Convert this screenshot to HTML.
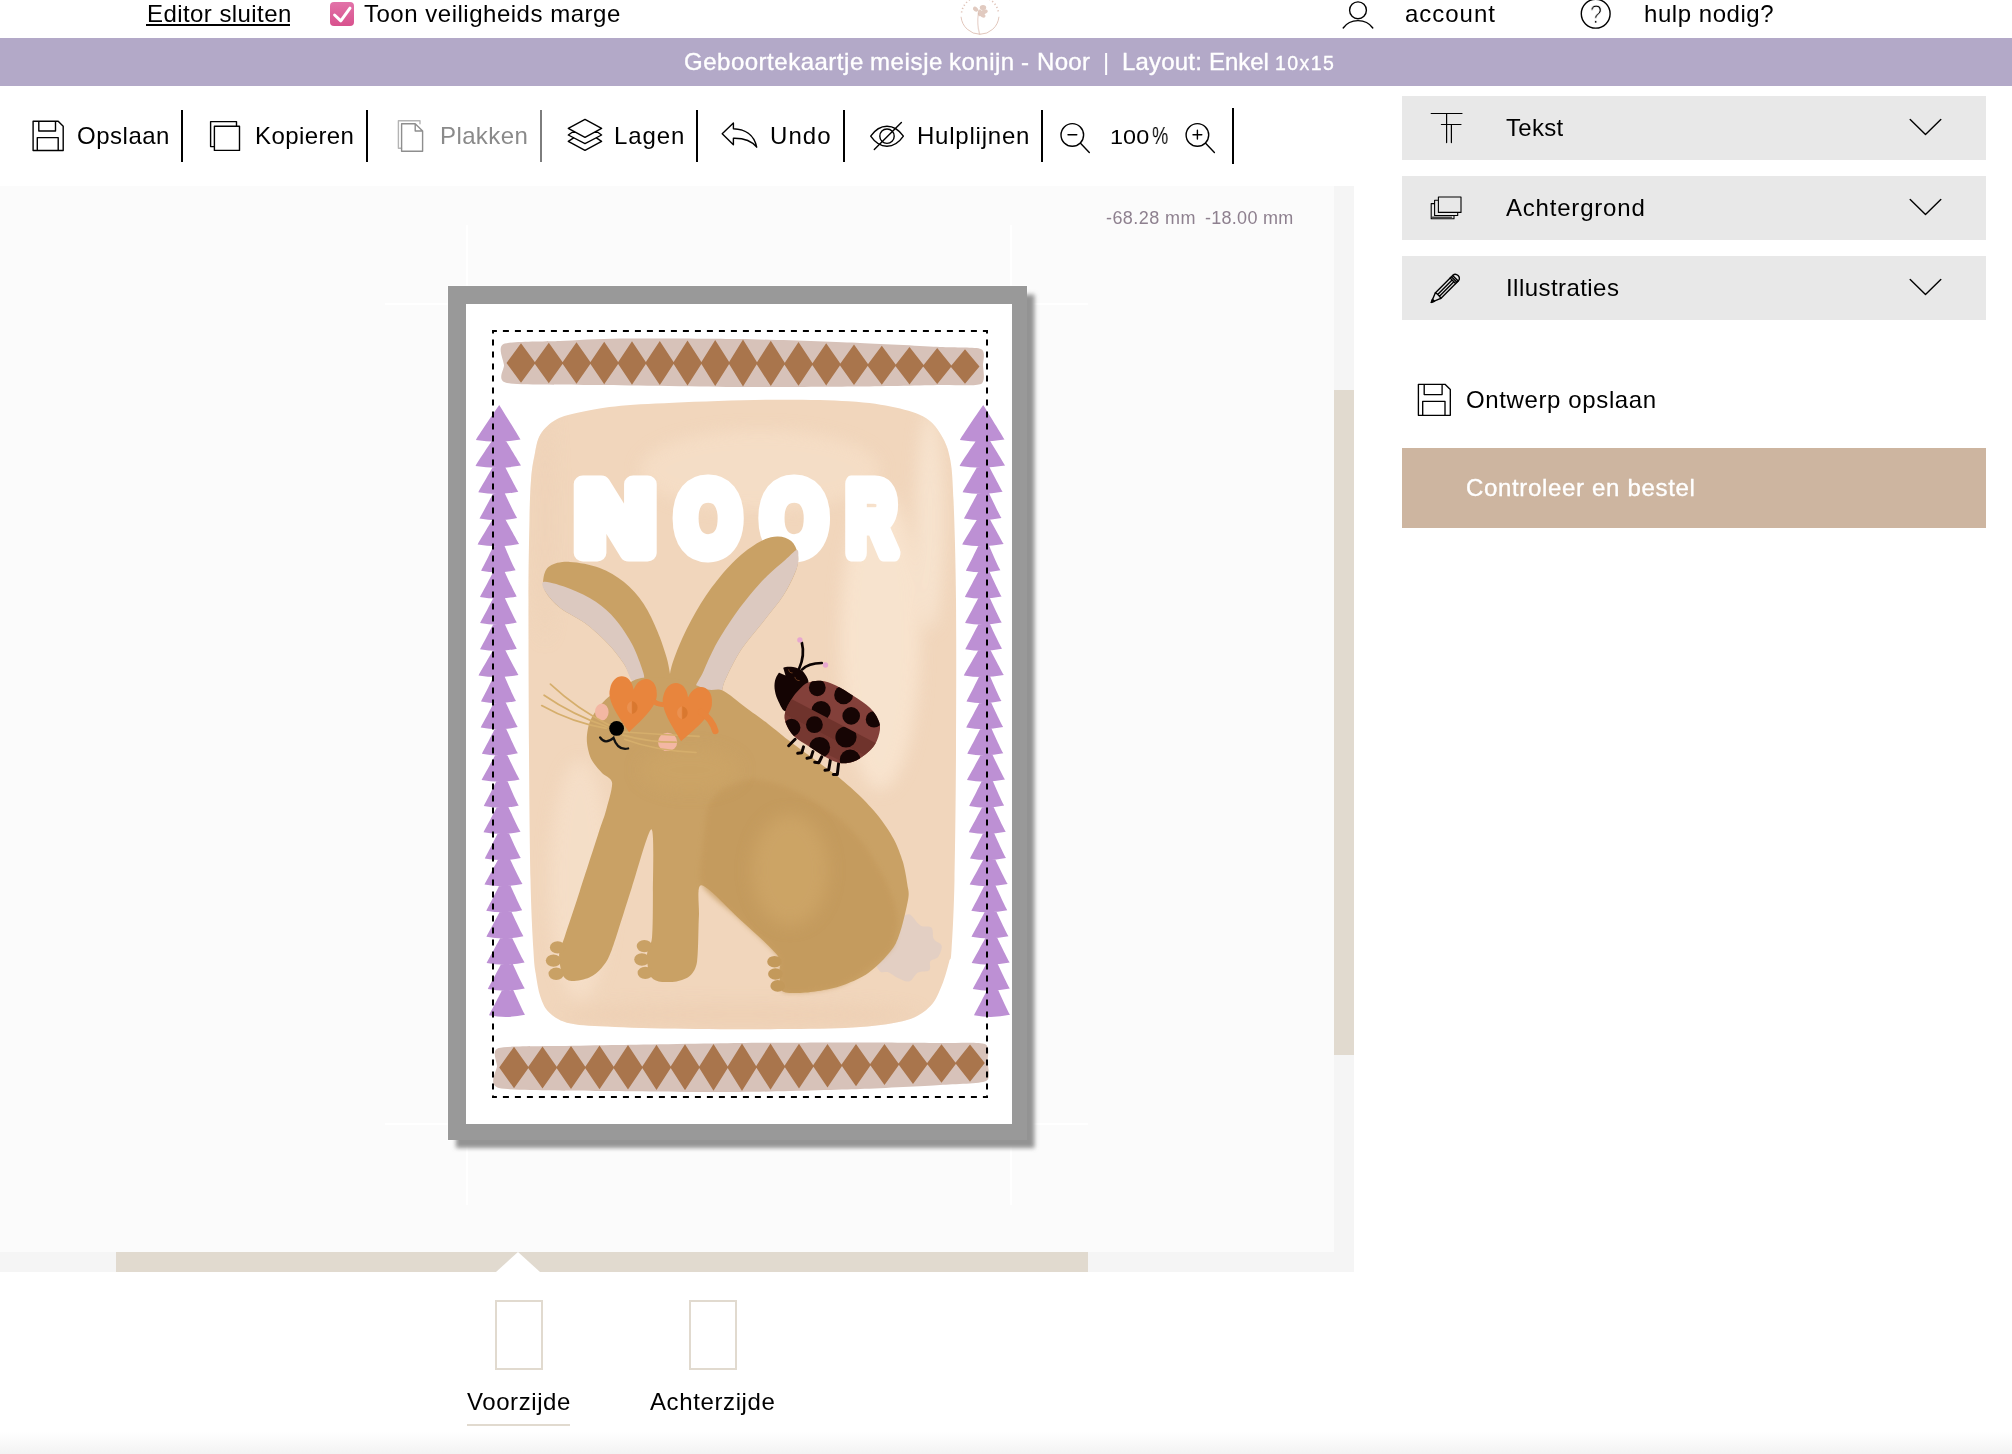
<!DOCTYPE html>
<html lang="nl"><head><meta charset="utf-8"><title>Editor</title>
<style>
html,body{margin:0;padding:0;}
body{width:2012px;height:1454px;position:relative;overflow:hidden;background:#fff;font-family:"Liberation Sans",sans-serif;}
.a{position:absolute;}
.t{position:absolute;white-space:nowrap;font-family:"Liberation Sans",sans-serif;will-change:transform;}
.sep{position:absolute;width:2px;background:#000;top:110px;height:52px;}
.acc{position:absolute;left:1402px;width:584px;height:64px;background:#e8e8e8;}
svg{position:absolute;overflow:visible;}
.ic{fill:none;stroke:#000;stroke-width:1.4;stroke-linejoin:round;stroke-linecap:round;}

</style></head>
<body>
<!-- top purple title bar -->
<div class="a" style="left:0;top:38px;width:2012px;height:48px;background:#b3a9c8;"></div>
<!-- canvas area -->
<div class="a" style="left:0;top:186px;width:1334px;height:1066px;background:#fbfbfb;"></div>
<div class="a" style="left:1334px;top:186px;width:20px;height:1086px;background:#f5f5f5;"></div>
<div class="a" style="left:1334px;top:390px;width:20px;height:665px;background:#e1dacf;"></div>
<div class="a" style="left:0;top:1252px;width:1334px;height:20px;background:#f5f5f5;"></div>
<div class="a" style="left:116px;top:1252px;width:972px;height:20px;background:#e1dacf;"></div>
<div class="a" style="left:496px;top:1252px;width:0;height:0;border-left:22.5px solid transparent;border-right:22.5px solid transparent;border-bottom:20px solid #fff;"></div>
<!-- bottom fade -->
<div class="a" style="left:0;top:1432px;width:2012px;height:22px;background:linear-gradient(#fff,#f3f3f3);"></div>
<!-- editor underline -->
<div class="a" style="left:146.2px;top:24.2px;width:143.7px;height:2px;background:#000;"></div>
<!-- checkbox -->
<div class="a" style="left:330px;top:2px;width:24px;height:24px;border-radius:4px;background:linear-gradient(#e273a9,#d8518d);"></div>
<svg style="left:330px;top:2px" width="24" height="24" viewBox="0 0 24 24"><path d="M4.6 13 L10.8 18.8 L20 6.2" fill="none" stroke="#fff" stroke-width="3" stroke-linecap="round" stroke-linejoin="round"/></svg>
<!-- toolbar separators -->
<div class="sep" style="left:181px;"></div>
<div class="sep" style="left:366px;"></div>
<div class="sep" style="left:540px;background:#7d7d7d;"></div>
<div class="sep" style="left:696px;"></div>
<div class="sep" style="left:843px;"></div>
<div class="sep" style="left:1041px;"></div>
<div class="sep" style="left:1232px;top:108px;height:56px;"></div>
<!-- accordions -->
<div class="acc" style="top:96px;"></div>
<div class="acc" style="top:176px;"></div>
<div class="acc" style="top:256px;"></div>
<div class="a" style="left:1402px;top:448px;width:584px;height:80px;background:#cdb5a0;"></div>
<!-- thumbnails -->
<div class="a" style="left:495px;top:1300px;width:44px;height:66px;border:2px solid #e1dacf;background:#fff;"></div>
<div class="a" style="left:689px;top:1300px;width:44px;height:66px;border:2px solid #e1dacf;background:#fff;"></div>
<div class="a" style="left:467px;top:1424px;width:103px;height:2px;background:#e1dacf;"></div>

<!-- icons -->
<svg style="left:0;top:0" width="2012" height="600" viewBox="0 0 2012 600">
<g class="ic" stroke-width="1.3" stroke="#1a1a1a">
<!-- save -->
<path d="M33.1 121.3H58.2L63.2 126.3V150.5H33.1ZM38.8 121.3V131H55.5V121.3M37.3 150.5V137.6H58.2V150.5"/>
<!-- copy -->
<path d="M214.4 146.6H210.6V121.6H236.5V126.3M214.4 126.3H239.5V150.4H214.4Z"/>
<!-- layers -->
<path d="M585 119.4L601.6 128.4L585 137.3L568.3 128.4ZM573.6 131.2L568.3 135L585 143.6L601.6 135L596.4 131.2M573.6 137.8L568.3 141.4L585 150.4L601.6 141.4L596.4 137.8" stroke-width="1.4"/>
<!-- undo -->
<path d="M722.2 133.7L733.4 122.9V128.7C744 129 754 134 756.7 147.2C752 141 744 138 733.4 138.2V144.8Z"/>
<!-- eye -->
<path d="M870.7 136.2C875 130 881 126.3 887 126.3C893 126.3 899 130 903.4 136.2C899 142.5 893 146.3 887 146.3C881 146.3 875 142.5 870.7 136.2Z"/>
<circle cx="887" cy="136.2" r="7.2"/>
<path d="M874.3 149.4L901.4 122.6"/>
<!-- zoom out / in -->
<circle cx="1072.3" cy="134.9" r="11.3"/><path d="M1068 134.7H1076.8M1080.5 143.2L1089.3 152.4"/>
<circle cx="1197.4" cy="134.9" r="11.3"/><path d="M1193 134.7H1201.8M1197.4 130.3V139.1M1205.6 143.2L1214.4 152.4"/>
<!-- T icon -->
<path d="M1431.2 113.5H1462M1446.6 113.5V142.6M1441.4 124.5H1461M1451.4 124.5V142.6" stroke-width="1.2"/>
<!-- background icon -->
<path d="M1438.4 197H1461V212.4H1438.4ZM1438.4 200.3H1434.6V215.5H1457.7V212.4M1434.6 203.6H1431.2V218.7H1454V215.5" stroke-width="1.1"/>
<path d="M1432.5 217.2H1452.5" stroke-width="1.6" stroke-dasharray="1 1" opacity=".7"/>
<!-- save 2 -->
<path d="M1418.4 384.3H1445L1450.3 389.5V415.3H1418.4ZM1424.2 384.3V394.6H1442.1V384.3M1422.7 415.3V401.3H1445V415.3" stroke-width="1.35"/>
</g>
<!-- pencil -->
<g class="ic" stroke-width="1.1" stroke="#1a1a1a" transform="translate(1431.3 302.4) rotate(-45)">
<path d="M0 0L9.5 -3.9H34.5C39 -3.9 39 3.9 34.5 3.9H9.5Z"/>
<path d="M9.5 -3.9C10.5 -2 10.5 2 9.5 3.9M10.5 -1.1H30.5M10.5 1.4H30.5M30.5 -3.9V3.9M32.3 -3.9V3.9M34.1 -3.9V3.9"/>
<path d="M0 0L3 -1.4V1.4Z" fill="#1a1a1a"/>
</g>
<!-- paste (disabled) -->
<g class="ic" stroke-width="1.3">
<path d="M401.5 148.3H398.4V120.7H420V123.7" stroke="#b4b4b4"/>
<path d="M401.6 123.8H415.2L422.6 131V151.2H401.6ZM415.2 123.8V131H422.6" stroke="#8e8e8e"/>
</g>
<!-- chevrons -->
<g class="ic" stroke-width="1.9" stroke="#111" stroke-linecap="butt" stroke-linejoin="miter">
<path d="M1910.2 119.6L1925.5 134.6L1940.8 119.6"/>
<path d="M1910.2 199.6L1925.5 214.6L1940.8 199.6"/>
<path d="M1910.2 279.6L1925.5 294.6L1940.8 279.6"/>
</g>
<!-- account -->
<g class="ic" stroke-width="1.3" stroke="#111">
<circle cx="1358" cy="10.3" r="8.4"/>
<path d="M1343.2 28C1347 22.5 1352 20.6 1358 20.6C1364 20.6 1369 22.5 1372.8 28"/>
<circle cx="1595.7" cy="13.7" r="14.4"/>
</g>
</svg>

<!-- help ? -->
<div class="t" style="left:1590px;top:1.4px;font-size:26px;line-height:26px;transform:scaleX(.82);transform-origin:0 0;-webkit-text-stroke:0.75px #fff;color:#000;">?</div>
<!-- logo -->
<svg style="left:950px;top:0" width="60" height="38" viewBox="950 0 60 38">
<g fill="none" stroke="#d9b7aa" stroke-linecap="round">
<path d="M961.1 17.2A19 19 0 0 0 998.9 17.2" stroke-width=".8"/>
<path d="M961.6 12.5A18.6 18.6 0 0 1 998.4 12.5" stroke-width="1.6" stroke-dasharray="1.2 2.4" stroke-linecap="butt" opacity=".85"/>
<path d="M979.6 34C977.6 27 977.3 20 978.4 13.5" stroke-width="1.3" opacity=".55"/>
</g>
<g fill="#d7b9ab" opacity=".75">
<ellipse cx="975.6" cy="9.2" rx="2.9" ry="2.2" transform="rotate(35 975.6 9.2)"/>
<ellipse cx="983" cy="7.6" rx="3.2" ry="2.6"/>
<ellipse cx="984.2" cy="11.8" rx="3.6" ry="2.2" transform="rotate(-15 984.2 11.8)"/>
<ellipse cx="982.5" cy="15.2" rx="3.2" ry="2" transform="rotate(30 982.5 15.2)"/>
<ellipse cx="979.8" cy="12.8" rx="2" ry="3.4"/>
</g>
</svg>

<svg style="left:0;top:0" width="2012" height="1454" viewBox="0 0 2012 1454">
<defs><filter id="sh" x="-5%" y="-5%" width="110%" height="110%"><feGaussianBlur stdDeviation="2"/></filter><filter id="b8"><feGaussianBlur stdDeviation="8"/></filter><filter id="b3"><feGaussianBlur stdDeviation="2.5"/></filter><clipPath id="blobclip"><use href="#blob"/></clipPath></defs>
<g stroke="#fff" stroke-width="2"><path d="M467 225V1205M1011 225V1205M385 304H1088M385 1124H1088"/></g>
<rect x="447.5" y="285.5" width="580" height="855" fill="#fff"/>
<rect x="456" y="294.5" width="578.5" height="853.5" fill="#939393" filter="url(#sh)"/>
<rect x="448" y="286" width="579" height="854" fill="#999"/>
<rect x="466" y="304" width="546" height="820" fill="#fff"/>
<path id="blob" d="M531.0 480.0C531.8 469.2 532.9 463.0 534.5 455.4C536.1 447.8 536.7 440.4 540.4 434.4C544.1 428.4 550.1 422.9 556.7 419.2C563.3 415.5 570.3 414.3 580.0 412.2C589.7 410.1 599.4 408.0 615.0 406.4C630.6 404.8 648.2 403.9 673.5 402.8C698.8 401.7 737.8 400.1 767.0 399.8C796.2 399.5 827.3 399.9 848.7 401.2C870.1 402.5 882.5 404.7 895.4 407.5C908.2 410.3 918.0 413.1 925.8 418.0C933.6 422.9 938.0 429.7 942.1 436.7C946.2 443.7 948.4 449.4 950.3 460.0C952.2 470.6 952.5 476.7 953.5 500.0C954.5 523.3 955.6 558.3 956.0 600.0C956.4 641.7 956.2 703.3 956.0 750.0C955.8 796.7 955.2 846.7 954.5 880.0C953.8 913.3 952.4 936.4 951.5 950.0C950.6 963.6 950.8 955.9 949.2 961.7C947.6 967.5 945.1 977.6 942.0 985.0C938.9 992.4 936.3 1000.2 930.5 1006.0C924.7 1011.8 918.7 1016.5 907.0 1020.0C895.3 1023.5 879.9 1025.5 860.4 1027.0C840.9 1028.5 817.5 1028.7 790.3 1029.0C763.1 1029.3 726.2 1029.3 697.0 1029.0C667.8 1028.7 636.0 1027.9 615.0 1027.0C594.0 1026.1 581.6 1025.9 570.7 1023.6C559.8 1021.3 554.8 1017.5 549.7 1013.0C544.7 1008.5 542.7 1003.3 540.4 996.7C538.1 990.1 536.9 981.2 535.7 973.4C534.5 965.6 534.3 965.6 533.4 950.0C532.5 934.4 531.2 913.3 530.5 880.0C529.8 846.7 529.3 796.7 529.0 750.0C528.7 703.3 528.4 638.3 528.5 600.0C528.6 561.7 529.1 540.0 529.5 520.0C529.9 500.0 530.2 490.8 531.0 480.0Z" fill="#f1d6bc"/>
<g clip-path="url(#blobclip)" filter="url(#b8)" opacity=".8"><ellipse cx="880" cy="640" rx="40" ry="150" fill="#f9e6d2"/><ellipse cx="760" cy="470" rx="120" ry="40" fill="#f6dfc8"/><ellipse cx="580" cy="880" rx="30" ry="120" fill="#f6e0ca"/><ellipse cx="930" cy="520" rx="14" ry="110" fill="#f8e6d3"/><ellipse cx="740" cy="1015" rx="180" ry="12" fill="#edcfb3"/><ellipse cx="545" cy="520" rx="10" ry="120" fill="#eed2b8"/></g>
<path d="M503.5 344.0C510.0 341.2 546.4 341.6 560.0 341.0C573.6 340.4 599.0 338.7 620.0 338.5C641.0 338.3 712.0 338.5 740.0 339.0C768.0 339.5 836.7 342.1 860.0 343.0C883.3 343.9 925.9 346.3 940.0 347.0C954.1 347.7 976.0 346.9 981.0 349.0C986.0 351.1 983.0 360.9 983.0 365.0C983.0 369.1 986.0 381.7 981.0 384.0C976.0 386.3 954.1 384.7 940.0 385.0C925.9 385.3 883.3 386.3 860.0 386.5C836.7 386.7 770.3 387.2 740.0 387.0C709.7 386.8 627.2 385.5 600.0 385.0C572.8 384.5 518.2 385.3 507.0 383.0C495.8 380.7 504.4 369.6 504.0 365.0C503.6 360.4 497.0 346.8 503.5 344.0Z" fill="#d7c2b9"/>
<path d="M521.0 343.2L535.5 363.0L521.0 382.8L506.5 363.0ZM548.8 342.7L563.2 363.0L548.8 383.3L534.2 363.0ZM576.5 342.3L591.0 363.0L576.5 383.7L562.0 363.0ZM604.2 341.8L618.8 363.0L604.2 384.2L589.8 363.0ZM632.0 341.3L646.5 363.0L632.0 384.7L617.5 363.0ZM659.8 340.9L674.2 363.0L659.8 385.1L645.2 363.0ZM687.5 340.4L702.0 363.0L687.5 385.6L673.0 363.0ZM715.2 339.9L729.8 363.0L715.2 386.1L700.8 363.0ZM743.0 339.6L757.5 363.0L743.0 386.5L728.5 363.0ZM770.8 340.8L785.2 363.5L770.8 386.1L756.2 363.5ZM798.5 342.0L813.0 363.9L798.5 385.8L784.0 363.9ZM826.2 343.2L840.8 364.3L826.2 385.4L811.8 364.3ZM854.0 344.4L868.5 364.8L854.0 385.1L839.5 364.8ZM881.8 345.7L896.2 365.2L881.8 384.7L867.2 365.2ZM909.5 346.9L924.0 365.6L909.5 384.4L895.0 365.6ZM937.2 348.1L951.8 366.1L937.2 384.1L922.8 366.1ZM965.0 349.3L979.5 366.5L965.0 383.7L950.5 366.5Z" fill="#a9754c"/>
<path d="M498.5 1048.0C505.9 1045.7 545.8 1046.3 560.0 1046.0C574.2 1045.7 599.0 1045.3 620.0 1045.0C641.0 1044.7 712.0 1043.3 740.0 1043.0C768.0 1042.7 836.7 1042.5 860.0 1042.5C883.3 1042.5 925.4 1042.8 940.0 1043.0C954.6 1043.2 979.5 1041.8 985.0 1044.0C990.5 1046.2 987.4 1057.7 987.5 1062.0C987.6 1066.3 991.5 1078.3 986.0 1081.0C980.5 1083.7 954.7 1084.1 940.0 1085.0C925.3 1085.9 883.3 1088.2 860.0 1089.0C836.7 1089.8 770.3 1091.8 740.0 1092.0C709.7 1092.2 628.1 1091.5 600.0 1091.0C571.9 1090.5 511.0 1090.9 499.0 1088.0C487.0 1085.1 497.1 1070.7 497.0 1066.0C496.9 1061.3 491.1 1050.3 498.5 1048.0Z" fill="#d7c2b9"/>
<path d="M514.0 1046.8L528.8 1067.5L514.0 1088.2L499.2 1067.5ZM542.5 1046.4L557.2 1067.5L542.5 1088.6L527.8 1067.5ZM571.0 1045.9L585.8 1067.4L571.0 1088.9L556.2 1067.4ZM599.5 1045.5L614.2 1067.4L599.5 1089.3L584.8 1067.4ZM628.0 1045.1L642.8 1067.4L628.0 1089.6L613.2 1067.4ZM656.5 1044.7L671.2 1067.3L656.5 1090.0L641.8 1067.3ZM685.0 1044.3L699.8 1067.3L685.0 1090.3L670.2 1067.3ZM713.5 1043.9L728.2 1067.3L713.5 1090.7L698.8 1067.3ZM742.0 1043.5L756.8 1067.2L742.0 1090.9L727.2 1067.2ZM770.5 1043.6L785.2 1066.7L770.5 1089.8L755.8 1066.7ZM799.0 1043.7L813.8 1066.2L799.0 1088.6L784.2 1066.2ZM827.5 1043.9L842.2 1065.7L827.5 1087.5L812.8 1065.7ZM856.0 1044.0L870.8 1065.1L856.0 1086.3L841.2 1065.1ZM884.5 1044.1L899.2 1064.6L884.5 1085.1L869.8 1064.6ZM913.0 1044.2L927.8 1064.1L913.0 1084.0L898.2 1064.1ZM941.5 1044.3L956.2 1063.6L941.5 1082.8L926.8 1063.6ZM970.0 1044.4L984.8 1063.1L970.0 1081.7L955.2 1063.1Z" fill="#a9754c"/>
<path d="M499.2 405.0C501.8 409.0 516.0 432.0 520.5 439.5Q498.2 443.5 475.9 440.0C480.4 432.0 496.6 409.0 499.2 405.0ZM499.2 430.1C501.8 434.1 516.5 458.1 521.0 465.6Q498.2 469.6 475.5 466.1C480.0 458.1 496.6 434.1 499.2 430.1ZM499.3 456.3C501.9 460.3 513.8 484.3 518.3 491.8Q498.3 495.8 478.3 492.3C482.8 484.3 496.7 460.3 499.3 456.3ZM499.3 482.4C501.9 486.4 512.6 510.5 517.1 518.0Q498.3 522.0 479.5 518.5C484.0 510.5 496.7 486.4 499.3 482.4ZM499.3 508.6C501.9 512.6 514.6 536.6 519.1 544.1Q498.3 548.1 477.6 544.6C482.1 536.6 496.7 512.6 499.3 508.6ZM499.4 534.8C502.0 538.8 511.1 562.8 515.6 570.2Q498.4 574.2 481.1 570.8C485.6 562.8 496.8 538.8 499.4 534.8ZM499.4 560.9C502.0 564.9 512.2 588.9 516.7 596.4Q498.4 600.4 480.0 596.9C484.5 588.9 496.8 564.9 499.4 560.9ZM499.4 587.0C502.0 591.0 512.3 615.0 516.8 622.5Q498.4 626.5 480.1 623.0C484.6 615.0 496.8 591.0 499.4 587.0ZM499.4 613.2C502.0 617.2 512.3 641.2 516.8 648.7Q498.4 652.7 480.0 649.2C484.5 641.2 496.8 617.2 499.4 613.2ZM499.5 639.4C502.1 643.4 514.0 667.4 518.5 674.9Q498.5 678.9 478.5 675.4C483.0 667.4 496.9 643.4 499.5 639.4ZM499.5 665.5C502.1 669.5 511.5 693.5 516.0 701.0Q498.5 705.0 481.0 701.5C485.5 693.5 496.9 669.5 499.5 665.5ZM500.2 691.6C502.8 695.6 513.2 719.6 517.7 727.1Q499.2 731.1 480.7 727.6C485.2 719.6 497.6 695.6 500.2 691.6ZM500.9 717.8C503.5 721.8 513.4 745.8 517.9 753.3Q499.9 757.3 481.9 753.8C486.4 745.8 498.3 721.8 500.9 717.8ZM501.6 744.0C504.2 748.0 515.1 772.0 519.6 779.5Q500.6 783.5 481.6 780.0C486.1 772.0 499.0 748.0 501.6 744.0ZM502.3 770.1C504.9 774.1 514.3 798.1 518.8 805.6Q501.3 809.6 483.8 806.1C488.3 798.1 499.7 774.1 502.3 770.1ZM503.0 796.2C505.6 800.2 516.0 824.2 520.5 831.8Q502.0 835.8 483.5 832.2C488.0 824.2 500.4 800.2 503.0 796.2ZM503.8 822.4C506.4 826.4 516.2 850.4 520.8 857.9Q502.8 861.9 484.8 858.4C489.2 850.4 501.1 826.4 503.8 822.4ZM504.5 848.5C507.1 852.5 518.0 876.5 522.5 884.0Q503.5 888.0 484.5 884.5C489.0 876.5 501.9 852.5 504.5 848.5ZM505.2 874.7C507.8 878.7 517.7 902.7 522.2 910.2Q504.2 914.2 486.2 910.7C490.7 902.7 502.6 878.7 505.2 874.7ZM505.9 900.8C508.5 904.8 518.9 928.8 523.4 936.3Q504.9 940.3 486.4 936.8C490.9 928.8 503.3 904.8 505.9 900.8ZM506.6 927.0C509.2 931.0 520.1 955.0 524.6 962.5Q505.6 966.5 486.6 963.0C491.1 955.0 504.0 931.0 506.6 927.0ZM507.3 953.1C509.9 957.1 520.3 981.1 524.8 988.6Q506.3 992.6 487.8 989.1C492.3 981.1 504.7 957.1 507.3 953.1ZM508.0 979.3C510.6 983.3 520.5 1007.3 525.0 1014.8Q507.0 1018.8 489.0 1015.3C493.5 1007.3 505.4 983.3 508.0 979.3Z" fill="#bd90d4"/>
<path d="M983.2 405.0C985.8 409.0 1000.0 432.0 1004.5 439.5Q982.2 443.5 959.9 440.0C964.4 432.0 980.6 409.0 983.2 405.0ZM983.4 430.1C986.0 434.1 1000.6 458.1 1005.1 465.6Q982.4 469.6 959.6 466.1C964.1 458.1 980.8 434.1 983.4 430.1ZM983.6 456.3C986.2 460.3 998.1 484.3 1002.6 491.8Q982.6 495.8 962.6 492.3C967.1 484.3 981.0 460.3 983.6 456.3ZM983.7 482.4C986.3 486.4 997.0 510.5 1001.5 518.0Q982.7 522.0 963.9 518.5C968.4 510.5 981.1 486.4 983.7 482.4ZM983.9 508.6C986.5 512.6 999.2 536.6 1003.7 544.1Q982.9 548.1 962.2 544.6C966.7 536.6 981.3 512.6 983.9 508.6ZM984.1 534.8C986.7 538.8 995.9 562.8 1000.4 570.2Q983.1 574.2 965.9 570.8C970.4 562.8 981.5 538.8 984.1 534.8ZM984.3 560.9C986.9 564.9 997.1 588.9 1001.6 596.4Q983.3 600.4 964.9 596.9C969.4 588.9 981.7 564.9 984.3 560.9ZM984.5 587.0C987.1 591.0 997.3 615.0 1001.8 622.5Q983.5 626.5 965.1 623.0C969.6 615.0 981.9 591.0 984.5 587.0ZM984.6 613.2C987.2 617.2 997.5 641.2 1002.0 648.7Q983.6 652.7 965.2 649.2C969.7 641.2 982.0 617.2 984.6 613.2ZM984.8 639.4C987.4 643.4 999.3 667.4 1003.8 674.9Q983.8 678.9 963.8 675.4C968.3 667.4 982.2 643.4 984.8 639.4ZM985.0 665.5C987.6 669.5 997.0 693.5 1001.5 701.0Q984.0 705.0 966.5 701.5C971.0 693.5 982.4 669.5 985.0 665.5ZM985.7 691.6C988.3 695.6 998.7 719.6 1003.2 727.1Q984.7 731.1 966.2 727.6C970.7 719.6 983.1 695.6 985.7 691.6ZM986.3 717.8C988.9 721.8 998.8 745.8 1003.3 753.3Q985.3 757.3 967.3 753.8C971.8 745.8 983.7 721.8 986.3 717.8ZM987.0 744.0C989.6 748.0 1000.5 772.0 1005.0 779.5Q986.0 783.5 967.0 780.0C971.5 772.0 984.4 748.0 987.0 744.0ZM987.7 770.1C990.3 774.1 999.7 798.1 1004.2 805.6Q986.7 809.6 969.2 806.1C973.7 798.1 985.1 774.1 987.7 770.1ZM988.3 796.2C990.9 800.2 1001.3 824.2 1005.8 831.8Q987.3 835.8 968.8 832.2C973.3 824.2 985.7 800.2 988.3 796.2ZM989.0 822.4C991.6 826.4 1001.5 850.4 1006.0 857.9Q988.0 861.9 970.0 858.4C974.5 850.4 986.4 826.4 989.0 822.4ZM989.7 848.5C992.3 852.5 1003.2 876.5 1007.7 884.0Q988.7 888.0 969.7 884.5C974.2 876.5 987.1 852.5 989.7 848.5ZM990.3 874.7C992.9 878.7 1002.8 902.7 1007.3 910.2Q989.3 914.2 971.3 910.7C975.8 902.7 987.7 878.7 990.3 874.7ZM991.0 900.8C993.6 904.8 1004.0 928.8 1008.5 936.3Q990.0 940.3 971.5 936.8C976.0 928.8 988.4 904.8 991.0 900.8ZM991.7 927.0C994.3 931.0 1005.2 955.0 1009.7 962.5Q990.7 966.5 971.7 963.0C976.2 955.0 989.1 931.0 991.7 927.0ZM992.3 953.1C994.9 957.1 1005.3 981.1 1009.8 988.6Q991.3 992.6 972.8 989.1C977.3 981.1 989.7 957.1 992.3 953.1ZM993.0 979.3C995.6 983.3 1005.5 1007.3 1010.0 1014.8Q992.0 1018.8 974.0 1015.3C978.5 1007.3 990.4 983.3 993.0 979.3Z" fill="#bd90d4"/>
<text y="552.5" font-family="'Liberation Sans',sans-serif" font-weight="700" font-size="100" fill="#fff" stroke="#fff" stroke-width="17" stroke-linejoin="round"><tspan x="575.8" textLength="79" lengthAdjust="spacingAndGlyphs">N</tspan><tspan x="676.2" textLength="64" lengthAdjust="spacingAndGlyphs">O</tspan><tspan x="762" textLength="64.5" lengthAdjust="spacingAndGlyphs">O</tspan><tspan x="846.5" textLength="49.5" lengthAdjust="spacingAndGlyphs">R</tspan></text>
<path d="M909.2 914.3C912.5 915.1 916.6 923.3 920.4 925.5C924.1 927.7 929.3 925.5 931.5 927.7C933.8 930.0 932.1 935.9 933.8 938.9C935.5 941.9 940.9 942.7 941.6 945.6C942.4 948.6 940.1 954.2 938.3 956.8C936.4 959.4 931.9 959.1 930.4 961.3C928.9 963.5 931.4 968.4 929.3 970.2C927.3 972.1 921.5 970.6 918.1 972.5C914.8 974.3 912.5 980.5 909.2 981.4C905.8 982.4 901.3 979.6 898.0 978.1C894.6 976.6 892.0 973.6 889.0 972.5C886.1 971.4 882.3 973.2 880.1 971.4C877.9 969.5 875.3 965.2 875.6 961.3C876.0 957.4 879.0 952.0 882.3 947.9C885.7 943.8 892.8 941.2 895.8 936.7C898.7 932.2 898.0 924.8 900.2 921.0C902.5 917.3 905.8 913.6 909.2 914.3Z" fill="#e0cdc4" opacity=".8"/>
<path d="M670.0 673.9C669.1 669.0 668.6 664.6 666.6 657.6C664.5 650.5 661.4 640.6 657.6 631.7C653.8 622.7 649.3 612.1 643.6 603.7C638.0 595.4 631.0 587.8 623.7 581.8C616.4 575.8 608.7 571.2 599.8 567.9C590.8 564.5 578.2 562.2 569.9 561.9C561.5 561.5 554.3 563.2 549.9 565.9C545.5 568.5 544.3 573.5 543.5 577.8C542.8 582.1 542.8 586.8 545.5 591.8C548.2 596.8 553.2 602.4 559.9 607.7C566.6 613.1 577.8 617.7 585.8 623.7C593.8 629.7 601.4 637.0 607.7 643.6C614.1 650.3 619.5 657.3 623.7 663.6C627.8 669.9 630.0 676.5 632.7 681.5C635.3 686.5 635.2 691.2 639.6 693.5C644.1 695.8 654.2 696.5 659.6 695.5C665.0 694.5 670.2 691.1 671.9 687.5C673.7 683.9 670.8 678.9 670.0 673.9Z" fill="#c9a165"/>
<path d="M544.3 581.8C548.4 581.3 561.3 585.5 569.9 588.8C578.4 592.1 588.1 596.6 595.8 601.8C603.4 606.9 609.7 612.7 615.7 619.7C621.7 626.7 627.3 635.7 631.7 643.6C636.0 651.6 639.6 661.6 641.6 667.6C643.6 673.5 645.1 677.2 643.6 679.5C642.1 681.8 636.0 684.2 632.7 681.5C629.3 678.9 627.8 669.9 623.7 663.6C619.5 657.3 614.1 650.3 607.7 643.6C601.4 637.0 593.8 629.7 585.8 623.7C577.8 617.7 566.6 613.1 559.9 607.7C553.2 602.4 548.1 596.1 545.5 591.8C542.9 587.5 540.3 582.3 544.3 581.8Z" fill="#dcc9c0"/>
<path d="M670.0 673.9C670.9 667.3 673.9 658.7 677.5 649.6C681.1 640.6 685.8 630.0 691.5 619.7C697.1 609.4 704.1 597.8 711.4 587.8C718.7 577.8 727.4 567.5 735.4 559.9C743.3 552.2 752.3 545.9 759.3 541.9C766.3 538.0 771.9 536.5 777.2 536.4C782.5 536.2 787.8 538.0 791.2 540.9C794.6 543.9 796.9 549.1 797.8 553.9C798.6 558.7 798.6 562.9 796.2 569.9C793.7 576.8 788.7 587.1 783.2 595.8C777.7 604.4 770.2 612.7 763.3 621.7C756.3 630.7 747.7 640.0 741.3 649.6C735.0 659.2 729.4 671.2 725.4 679.5C721.4 687.8 722.7 695.8 717.4 699.5C712.1 703.1 701.1 703.1 693.5 701.5C685.9 699.8 675.9 694.1 671.9 689.5C668.0 684.9 669.0 680.6 670.0 673.9Z" fill="#c9a165"/>
<path d="M796.8 549.9C794.6 550.2 790.1 555.6 785.2 559.9C780.3 564.2 773.2 569.9 767.3 575.8C761.3 581.8 755.3 588.5 749.3 595.8C743.3 603.1 737.0 611.4 731.4 619.7C725.7 628.0 720.1 637.0 715.4 645.6C710.8 654.3 706.8 663.9 703.4 671.5C700.1 679.2 693.1 686.8 695.5 691.5C697.8 696.1 712.4 701.5 717.4 699.5C722.4 697.5 721.4 687.8 725.4 679.5C729.4 671.2 735.0 659.2 741.3 649.6C747.7 640.0 756.3 630.7 763.3 621.7C770.2 612.7 777.7 604.4 783.2 595.8C788.7 587.1 793.7 576.2 796.2 569.9C798.7 563.5 798.1 561.2 798.2 557.9C798.3 554.6 798.9 549.6 796.8 549.9Z" fill="#dcc9c0"/>
<path d="M647.6 677.5C640.9 677.8 637.5 678.4 631.7 681.5C625.8 684.6 611.5 694.2 605.7 699.5C600.0 704.8 593.4 713.8 590.8 719.4C588.1 725.0 586.8 733.9 586.8 739.3C586.8 744.8 588.7 753.6 590.8 758.3C592.9 763.0 598.8 769.4 601.8 772.8C604.7 776.3 611.5 777.6 612.1 782.8C612.7 788.1 608.0 803.2 606.1 810.3C604.2 817.5 602.5 820.8 598.3 833.8C594.1 846.8 580.6 888.7 575.9 903.1C571.2 917.5 567.1 929.5 564.7 936.7C562.4 943.9 559.5 949.3 559.1 954.6C558.8 959.9 560.8 971.0 562.5 974.7C564.2 978.4 567.7 980.6 571.4 981.0C575.2 981.4 585.1 979.2 589.3 977.4C593.6 975.6 598.5 971.8 601.6 968.0C604.8 964.2 607.5 961.4 611.7 950.1C615.9 938.8 626.3 904.4 631.8 887.5C637.4 870.6 648.6 828.4 651.5 829.3C654.5 830.3 652.8 879.0 652.9 894.2C652.9 909.4 652.8 929.4 652.0 937.8C651.1 946.3 647.4 949.4 647.0 954.6C646.7 959.8 648.1 971.0 649.7 974.7C651.4 978.5 654.9 980.5 658.7 981.4C662.4 982.4 672.2 982.2 676.6 981.4C680.9 980.6 687.1 978.7 690.0 975.8C692.9 973.0 695.9 969.6 697.1 961.3C698.4 953.0 698.3 927.2 698.9 916.6C699.6 905.9 696.0 884.9 701.6 885.3C707.3 885.6 728.6 909.0 739.2 918.8C749.8 928.6 771.6 947.5 777.2 955.0C782.8 962.5 778.8 967.5 779.4 972.5C780.1 977.4 779.5 987.5 781.7 990.4C783.9 993.3 790.4 992.9 795.1 993.1C799.8 993.2 809.0 992.4 815.2 991.5C821.5 990.6 832.3 989.0 839.8 986.3C847.4 983.7 861.1 978.5 868.9 972.5C876.7 966.5 890.3 953.6 895.8 943.4C901.2 933.3 906.4 908.3 908.0 900.0C909.6 891.7 908.0 889.7 907.3 884.3C906.6 878.9 904.7 868.0 902.8 861.6C900.9 855.2 897.1 845.3 893.7 838.9C890.3 832.5 883.4 822.3 878.5 816.2C873.6 810.1 864.8 800.7 858.9 795.0C853.0 789.3 842.6 780.4 836.2 775.3C829.8 770.2 819.9 763.4 813.5 758.7C807.1 754.0 797.2 746.9 790.8 742.0C784.4 737.1 774.5 728.8 768.1 723.9C761.7 719.0 751.8 711.9 745.4 707.2C739.0 702.5 728.0 693.1 722.7 690.6C717.4 688.1 713.5 691.0 707.4 689.5C701.4 687.9 687.9 681.2 679.5 679.5C671.1 677.8 654.3 677.2 647.6 677.5Z" fill="#c9a165"/>
<ellipse cx="557.6" cy="947.4" rx="7.7" ry="6.2" fill="#c9a165"/>
<ellipse cx="553.5" cy="960.6" rx="7.7" ry="6.2" fill="#c9a165"/>
<ellipse cx="556.2" cy="973.8" rx="7.7" ry="6.2" fill="#c9a165"/>
<ellipse cx="644.4" cy="946.1" rx="7.7" ry="6.2" fill="#c9a165"/>
<ellipse cx="641.9" cy="959.5" rx="7.7" ry="6.2" fill="#c9a165"/>
<ellipse cx="645.3" cy="972.9" rx="7.7" ry="6.2" fill="#c9a165"/>
<path d="M743.7 780.5C749.4 779.0 755.0 779.1 760.5 779.9C766.0 780.7 776.8 783.6 783.2 785.9C789.6 788.2 798.6 792.4 805.9 796.5C813.2 800.6 827.1 808.6 835.0 815.0C842.9 821.4 855.0 832.9 862.0 842.0C869.0 851.1 880.1 869.8 885.0 880.0C889.9 890.2 895.9 905.9 897.0 915.0C898.1 924.1 895.7 938.5 893.0 945.0C890.3 951.5 884.7 955.9 877.9 961.3C871.0 966.7 853.1 979.5 844.3 983.7C835.5 987.8 822.1 989.8 815.2 991.0C808.3 992.3 799.8 992.7 795.1 992.6C790.4 992.5 783.9 993.2 781.7 990.4C779.5 987.6 780.1 977.4 779.4 972.5C778.8 967.5 782.8 962.5 777.2 955.0C771.6 947.5 749.7 928.6 739.2 918.8C728.7 909.0 707.5 895.0 702.3 885.3C697.1 875.5 702.0 857.0 702.3 849.5C702.6 841.9 703.8 837.0 704.5 831.3C705.2 825.6 705.5 814.3 707.6 808.6C709.7 802.9 714.6 794.4 719.7 790.5C724.8 786.6 738.0 782.0 743.7 780.5Z" fill="#c3995b" filter="url(#b3)" opacity=".7"/>
<ellipse cx="774.5" cy="961.7" rx="7.3" ry="5.8" fill="#c3995b"/>
<ellipse cx="775.4" cy="974.0" rx="7.3" ry="5.8" fill="#c3995b"/>
<ellipse cx="777.7" cy="985.9" rx="7.3" ry="5.8" fill="#c3995b"/>
<g filter="url(#b8)"><ellipse cx="790" cy="870" rx="38" ry="55" fill="#d3ab6b" opacity=".55"/><ellipse cx="690" cy="770" rx="50" ry="22" fill="#cfa768" opacity=".4"/></g>
<ellipse cx="601.8" cy="712.0" rx="6.8" ry="8.6" fill="#f3b7a3"/>
<ellipse cx="667.6" cy="741.9" rx="9.6" ry="9.2" fill="#f3b7a3"/>
<g fill="none" stroke="#d5ae6c" stroke-width="1.7" stroke-linecap="round">
<path d="M609.3 725.2Q577.0 709.1 550.4 684.2"/>
<path d="M607.2 726.8Q571.7 714.3 544.1 695.2"/>
<path d="M606.2 728.4Q571.7 722.6 541.7 705.6"/>
<path d="M624.5 732.0Q660.5 734.6 699.1 736.4"/>
<path d="M622.9 735.1Q650.0 742.5 676.1 742.2"/>
<path d="M624.5 739.3Q655.2 750.8 696.0 752.5"/>
</g>
<g fill="#e8853d">
<path d="M0 28.5C-9.4 17.1 -25.9 0.0 -23.5 -12.5C-22.1 -29.6 -4.7 -31.4 0 -14.2C4.7 -31.4 22.1 -29.6 23.5 -12.5C25.9 0.0 9.4 17.1 0 28.5Z" transform="translate(632.1 703.8) rotate(6)"/>
<path d="M0 29.5C-9.8 17.7 -27.0 0.0 -24.5 -13.0C-23.0 -30.7 -4.9 -32.5 0 -14.8C4.9 -32.5 23.0 -30.7 24.5 -13.0C27.0 0.0 9.8 17.7 0 29.5Z" transform="translate(685.7 712.0) rotate(9)"/>
<path d="M652.1 700.2Q657.3 704.9 663.6 704.4" fill="none" stroke="#e8853d" stroke-width="5"/>
<path d="M701.2 712.2Q711.6 718.4 715.3 731.0" fill="none" stroke="#e8853d" stroke-width="6.5" stroke-linecap="round"/>
</g>
<path d="M632.2 701.0C639.4 702.5 639.4 712.5 632.2 714.0Z" fill="#d9782f"/>
<path d="M631.6 701.0C625.4 703.5 625.4 711.5 631.6 714.0Z" fill="#ea9150"/>
<path d="M682.3 706.2C689.5 707.7 689.5 717.7 682.3 719.2Z" fill="#d9782f"/>
<path d="M681.7 706.2C675.5 708.7 675.5 716.7 681.7 719.2Z" fill="#ea9150"/>
<circle cx="616.6" cy="728.4" r="7.4" fill="#000"/>
<path d="M600.1 737.4Q605.1 745.1 613.5 737.8Q617.7 750.8 628.1 748.5" fill="none" stroke="#111" stroke-width="2.3" stroke-linecap="round"/>
<g>
<path d="M795.1 739.3L788.7 745.7M803.5 746.9L801.8 752.7L797.7 753.3M812.9 751.6L811.1 757.4L807.0 758.2M821.8 756.8L818.8 762.7L814.7 762.2M830.4 759.8L828.7 769.7L825.0 770.3M838.6 763.3L837.3 774.4L833.3 774.5" fill="none" stroke="#0c0302" stroke-width="3" stroke-linecap="round" stroke-linejoin="round"/>
<path d="M799.2 668.5Q805.0 655.1 801.9 642.8" fill="none" stroke="#0c0302" stroke-width="2.7" stroke-linecap="round"/>
<path d="M802.3 669.4Q808.0 663.3 821.8 663.0" fill="none" stroke="#0c0302" stroke-width="2.7" stroke-linecap="round"/>
<circle cx="799.9" cy="639.9" r="2.7" fill="#e7a7cf"/>
<circle cx="825.5" cy="665.0" r="2.7" fill="#e7a7cf"/>
<path d="M783.4 667.7C785.4 666.7 788.3 666.5 791.0 666.8C793.7 667.0 797.3 667.8 799.8 669.1C802.2 670.5 804.2 672.6 805.6 675.0C807.1 677.3 808.7 679.8 808.5 683.2C808.3 686.5 806.7 691.0 804.4 694.9C802.2 698.8 798.3 703.8 795.1 706.5C791.9 709.3 787.9 712.0 785.1 711.2C782.4 710.4 780.4 705.2 778.7 701.9C777.0 698.6 775.6 694.9 775.0 691.3C774.3 687.8 774.3 683.9 775.0 680.8C775.6 677.7 777.3 675.0 778.7 672.9C780.1 670.7 781.3 668.7 783.4 667.7Z" fill="#140403"/>
<path d="M776.4 671.5L785.5 675.4L782.9 666.8Z" fill="#f2d8bf"/>
<path d="M788.7 669.7Q789.0 673.2 792.2 672.9M794.9 677.3Q795.7 680.8 799.2 680.6" fill="none" stroke="#7a4422" stroke-width="0.8" stroke-linecap="round"/>
<clipPath id="shellclip"><path d="M808.0 682.6C811.6 681.1 816.1 680.3 820.8 680.8C825.5 681.3 830.6 683.0 836.0 685.5C841.5 688.0 847.9 692.3 853.6 696.0C859.2 699.7 865.8 703.8 869.9 707.7C874.0 711.6 876.5 715.7 878.1 719.4C879.8 723.1 880.4 725.8 879.9 729.9C879.4 734.0 877.6 739.9 875.2 744.0C872.8 748.1 868.9 751.6 865.3 754.5C861.7 757.4 857.9 760.1 853.6 761.5C849.3 762.9 844.2 763.7 839.5 762.9C834.9 762.2 830.6 759.8 825.5 757.1C820.4 754.3 814.4 750.1 809.1 746.5C803.9 743.0 797.8 739.9 793.9 736.0C790.1 732.2 787.4 727.4 786.0 723.5C784.5 719.6 784.2 716.4 785.1 712.4C786.0 708.4 789.0 703.3 791.3 699.5C793.7 695.7 796.4 692.4 799.2 689.6C801.9 686.8 804.3 684.0 808.0 682.6Z"/></clipPath>
<path d="M808.0 682.6C811.6 681.1 816.1 680.3 820.8 680.8C825.5 681.3 830.6 683.0 836.0 685.5C841.5 688.0 847.9 692.3 853.6 696.0C859.2 699.7 865.8 703.8 869.9 707.7C874.0 711.6 876.5 715.7 878.1 719.4C879.8 723.1 880.4 725.8 879.9 729.9C879.4 734.0 877.6 739.9 875.2 744.0C872.8 748.1 868.9 751.6 865.3 754.5C861.7 757.4 857.9 760.1 853.6 761.5C849.3 762.9 844.2 763.7 839.5 762.9C834.9 762.2 830.6 759.8 825.5 757.1C820.4 754.3 814.4 750.1 809.1 746.5C803.9 743.0 797.8 739.9 793.9 736.0C790.1 732.2 787.4 727.4 786.0 723.5C784.5 719.6 784.2 716.4 785.1 712.4C786.0 708.4 789.0 703.3 791.3 699.5C793.7 695.7 796.4 692.4 799.2 689.6C801.9 686.8 804.3 684.0 808.0 682.6Z" fill="#83403a"/>
<g clip-path="url(#shellclip)">
<path d="M788.1 697.2L877.0 743.7L869.9 758.0L781.1 712.4Z" fill="#6a2f29" opacity=".8"/>
<path d="M781.1 712.4L869.9 758.0L862.9 772.0L774.0 727.6Z" fill="#733630" opacity=".8"/>
<circle cx="817.3" cy="687.8" r="8.4" fill="#160504"/>
<circle cx="843.6" cy="694.9" r="9.4" fill="#160504"/>
<circle cx="851.2" cy="715.9" r="8.8" fill="#160504"/>
<circle cx="874.0" cy="719.4" r="8.2" fill="#160504"/>
<circle cx="791.6" cy="727.6" r="8.8" fill="#160504"/>
<circle cx="814.4" cy="724.7" r="8.4" fill="#160504"/>
<circle cx="819.6" cy="747.5" r="10.5" fill="#160504"/>
<circle cx="850.1" cy="759.8" r="10.3" fill="#160504"/>
<clipPath id="upper"><path d="M788.1 697.2L877.0 743.7L888.7 690.2L806.8 666.8Z"/></clipPath>
<clipPath id="lower"><path d="M788.1 697.2L877.0 743.7L865.3 783.7L771.7 737.0Z"/></clipPath>
<circle cx="821.1" cy="710.6" r="9.6" fill="#160504" clip-path="url(#upper)"/>
<circle cx="846.0" cy="737.0" r="10.6" fill="#160504" clip-path="url(#lower)"/>
</g></g>
</svg>
<svg style="left:0;top:0" width="2012" height="1454" viewBox="0 0 2012 1454"><g fill="none" stroke="#000" stroke-width="2" stroke-dasharray="6 6"><path d="M492 331H988M492 1096.9H988" stroke-dashoffset="1.1"/><path d="M493 330V1098M987 330V1098" stroke-dashoffset="2.6"/></g></svg>
<div class="t" style="left:146.5px;top:1.6px;font-size:24px;line-height:24px;letter-spacing:0.431px;color:#000;">Editor sluiten</div>
<div class="t" style="left:364.4px;top:1.6px;font-size:24px;line-height:24px;letter-spacing:0.513px;color:#000;">Toon veiligheids marge</div>
<div class="t" style="left:1404.7px;top:1.6px;font-size:24px;line-height:24px;letter-spacing:0.968px;color:#000;">account</div>
<div class="t" style="left:1643.5px;top:1.6px;font-size:24px;line-height:24px;letter-spacing:0.543px;color:#000;">hulp nodig?</div>
<div class="t" style="left:684.1px;top:50.4px;font-size:24px;line-height:24px;letter-spacing:0.510px;color:#fff;-webkit-text-stroke:0.35px #fff;">Geboortekaartje</div>
<div class="t" style="left:870.3px;top:50.4px;font-size:24px;line-height:24px;letter-spacing:0.619px;color:#fff;-webkit-text-stroke:0.35px #fff;">meisje</div>
<div class="t" style="left:949.4px;top:50.4px;font-size:24px;line-height:24px;letter-spacing:0.488px;color:#fff;-webkit-text-stroke:0.35px #fff;">konijn</div>
<div class="t" style="left:1020.9px;top:50.4px;font-size:24px;line-height:24px;letter-spacing:0.000px;color:#fff;-webkit-text-stroke:0.35px #fff;">-</div>
<div class="t" style="left:1037.0px;top:50.4px;font-size:24px;line-height:24px;letter-spacing:0.324px;color:#fff;-webkit-text-stroke:0.35px #fff;">Noor</div>
<div class="t" style="left:1102.9px;top:50.4px;font-size:24px;line-height:24px;letter-spacing:0.000px;color:#fff;">|</div>
<div class="t" style="left:1122.0px;top:50.4px;font-size:24px;line-height:24px;letter-spacing:0.190px;color:#fff;-webkit-text-stroke:0.35px #fff;">Layout:</div>
<div class="t" style="left:1208.5px;top:50.4px;font-size:24px;line-height:24px;letter-spacing:-0.051px;color:#fff;-webkit-text-stroke:0.35px #fff;">Enkel</div>
<div class="t" style="left:1274.8px;top:54.1px;font-size:19.5px;line-height:19.5px;letter-spacing:1.404px;color:#fff;-webkit-text-stroke:0.35px #fff;">10x15</div>
<div class="t" style="left:77.3px;top:123.5px;font-size:24px;line-height:24px;letter-spacing:0.510px;color:#000;">Opslaan</div>
<div class="t" style="left:255.4px;top:123.5px;font-size:24px;line-height:24px;letter-spacing:0.411px;color:#000;">Kopieren</div>
<div class="t" style="left:440.0px;top:123.5px;font-size:24px;line-height:24px;letter-spacing:0.394px;color:#8a8a8a;">Plakken</div>
<div class="t" style="left:613.8px;top:123.5px;font-size:24px;line-height:24px;letter-spacing:0.877px;color:#000;">Lagen</div>
<div class="t" style="left:769.7px;top:123.5px;font-size:24px;line-height:24px;letter-spacing:1.091px;color:#000;">Undo</div>
<div class="t" style="left:917.0px;top:123.5px;font-size:24px;line-height:24px;letter-spacing:0.772px;color:#000;">Hulplijnen</div>
<div class="t" style="left:1110.2px;top:127.7px;font-size:19.5px;line-height:19.5px;letter-spacing:0.072px;color:#000;transform:scaleX(1.2);transform-origin:0 0;">100</div>
<div class="t" style="left:1151.8px;top:124.0px;font-size:24px;line-height:24px;letter-spacing:0.000px;color:#000;transform:scaleX(0.762);transform-origin:0 0;">%</div>
<div class="t" style="left:1506.4px;top:115.7px;font-size:24px;line-height:24px;letter-spacing:0.288px;color:#000;">Tekst</div>
<div class="t" style="left:1506.4px;top:195.9px;font-size:24px;line-height:24px;letter-spacing:0.800px;color:#000;">Achtergrond</div>
<div class="t" style="left:1505.6px;top:275.9px;font-size:24px;line-height:24px;letter-spacing:0.442px;color:#000;">Illustraties</div>
<div class="t" style="left:1465.7px;top:387.6px;font-size:24px;line-height:24px;letter-spacing:0.622px;color:#000;">Ontwerp opslaan</div>
<div class="t" style="left:1465.5px;top:475.7px;font-size:24px;line-height:24px;letter-spacing:0.669px;color:#fff;-webkit-text-stroke:0.35px #fff;">Controleer en bestel</div>
<div class="t" style="left:467.0px;top:1390.1px;font-size:24px;line-height:24px;letter-spacing:0.577px;color:#000;">Voorzijde</div>
<div class="t" style="left:650.0px;top:1390.1px;font-size:24px;line-height:24px;letter-spacing:0.613px;color:#000;">Achterzijde</div>
<div class="t" style="left:1106.3px;top:208.9px;font-size:18px;line-height:18px;letter-spacing:0.421px;color:#8e808f;">-68.28 mm</div>
<div class="t" style="left:1205.4px;top:208.9px;font-size:18px;line-height:18px;letter-spacing:0.271px;color:#8e808f;">-18.00 mm</div>
</body></html>
